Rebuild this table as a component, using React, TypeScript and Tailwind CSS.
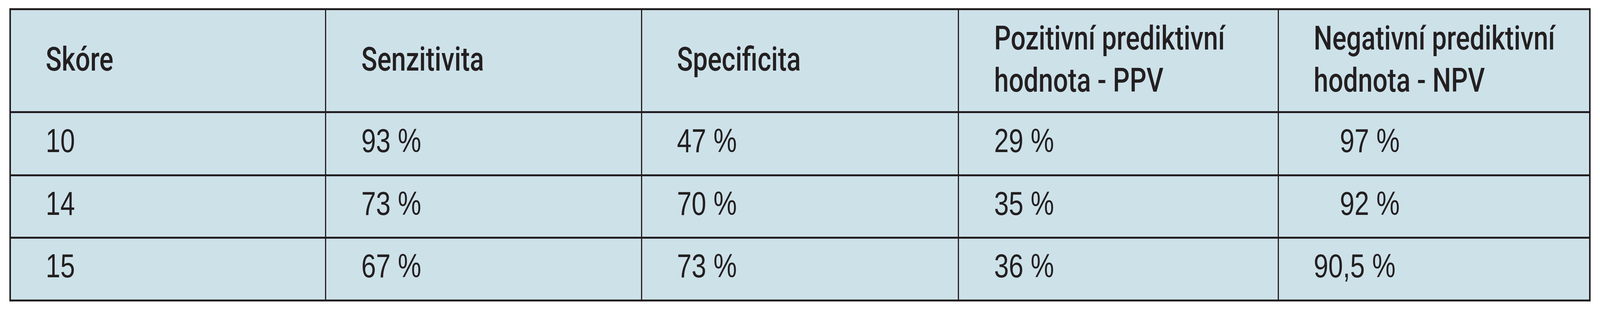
// App.tsx
// Score table — sensitivity / specificity / PPV / NPV per score threshold

import { useEffect, useState } from "react";

type Row = {
  score: string;
  values: string[];
  // the NPV column has a few values pushed right in the source table
  npvIndent?: boolean;
};

const headers: string[][] = [
  ["Skóre"],
  ["Senzitivita"],
  ["Specificita"],
  ["Pozitivní prediktivní", "hodnota - PPV"],
  ["Negativní prediktivní", "hodnota - NPV"],
];

const rows: Row[] = [
  { score: "10", values: ["93 %", "47 %", "29 %", "97 %"], npvIndent: true },
  { score: "14", values: ["73 %", "70 %", "35 %", "92 %"], npvIndent: true },
  { score: "15", values: ["67 %", "73 %", "36 %", "90,5 %"] },
];

const rowHeights = ["h-[157px]", "h-[155px]", "h-[156px]"];

// design width of the table; text is squeezed sideways when the window is narrower
const DESIGN_WIDTH = 5236;

export default function App() {
  const [sx, setSx] = useState(1);

  useEffect(() => {
    const update = () => setSx(Math.min(1, window.innerWidth / DESIGN_WIDTH));
    update();
    window.addEventListener("resize", update);
    return () => window.removeEventListener("resize", update);
  }, []);

  const squeeze = { transform: `scaleX(${sx})` };

  return (
    <div className="w-full h-[800px] bg-white pt-[21px] px-[0.592vw]">
      <div className="grid w-full grid-cols-[minmax(0,1028fr)_minmax(0,1030fr)_minmax(0,1033fr)_minmax(0,1042fr)_minmax(0,1015fr)] gap-x-[3px] gap-y-[5px] bg-[#231f20] px-[4px] py-[5px] text-[#231f20]">
        {/* Header row */}
        {headers.map((lines, i) => (
          <div
            key={i}
            className="flex h-[259px] min-w-0 flex-col justify-center bg-[#cde1e9] pl-[2.177vw] pb-[8px] font-['Roboto',sans-serif] text-[86px] font-medium leading-[108px]"
          >
            {lines.map((line) => (
              <span
                key={line}
                className="inline-block origin-left whitespace-nowrap"
                style={squeeze}
              >
                {line}
              </span>
            ))}
          </div>
        ))}

        {/* Data rows */}
        {rows.map((row, r) => {
          const cells = [row.score, ...row.values];
          return cells.map((cell, c) => (
            <div
              key={`${r}-${c}`}
              className={`flex ${rowHeights[r]} min-w-0 items-center bg-[#cde1e9] pb-[18px] font-['Liberation_Sans',Arial,sans-serif] text-[86px] leading-[100px] ${
                c === 4 && row.npvIndent ? "pl-[3.82vw]" : "pl-[2.177vw]"
              }`}
            >
              <span
                className="inline-block origin-left whitespace-nowrap"
                style={squeeze}
              >
                {cell}
              </span>
            </div>
          ));
        })}
      </div>
    </div>
  );
}
